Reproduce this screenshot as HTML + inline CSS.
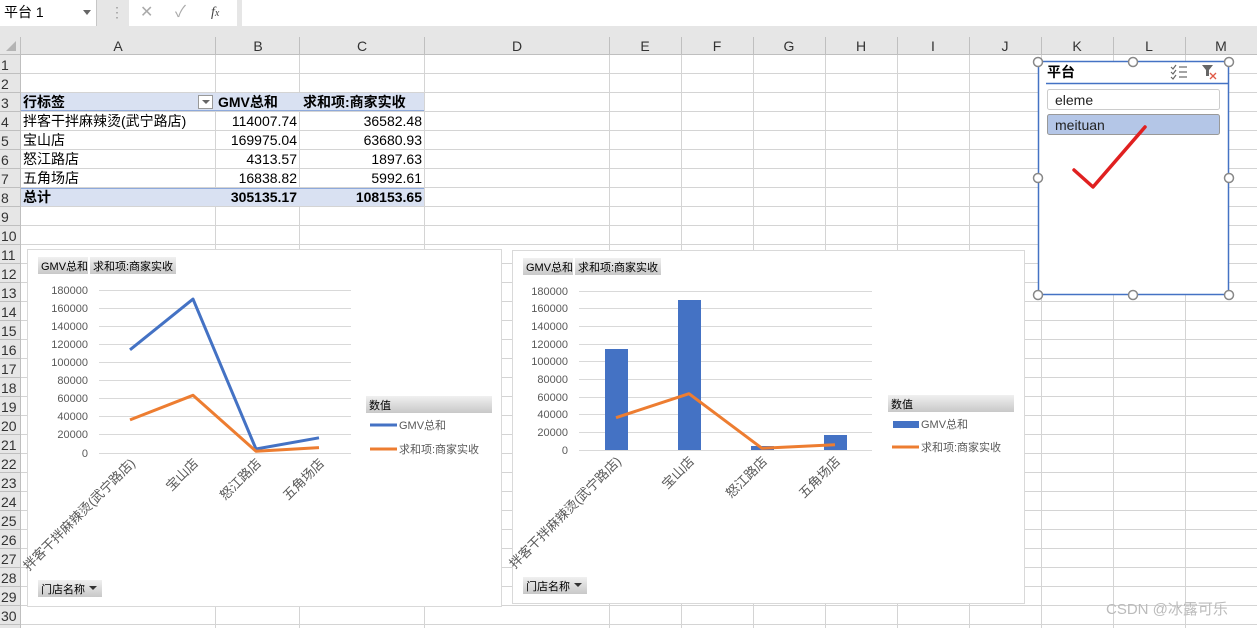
<!DOCTYPE html>
<html><head><meta charset="utf-8"><style>
*{margin:0;padding:0;box-sizing:border-box}
body{width:1257px;height:628px;overflow:hidden;background:#fff;font-family:"Liberation Sans","Noto Sans CJK SC",sans-serif;position:relative}
.abs{position:absolute}
.t{position:absolute;font-size:14px;color:#000;white-space:nowrap;line-height:19px}
.r{text-align:right}
.b{font-weight:bold}
</style></head><body>
<div class="abs" style="left:0;top:0;width:1257px;height:37px;background:#e6e6e6"></div>
<div class="abs" style="left:0;top:0;width:97px;height:26px;background:#fff;border-right:1px solid #c6c6c6"></div>
<div class="t" style="left:4px;top:3px;font-size:14px">平台 1</div>
<div class="abs" style="left:83px;top:10px;border-left:4px solid transparent;border-right:4px solid transparent;border-top:5px solid #666"></div>
<div class="t" style="left:110px;top:3px;color:#999">⋮</div>
<div class="abs" style="left:129px;top:0;width:108px;height:26px;background:#fff"></div>
<div class="t" style="left:140px;top:3px;color:#aaa;font-size:16px">✕</div>
<div class="t" style="left:175px;top:3px;color:#aaa;font-size:16px">✓</div>
<div class="t" style="left:211px;top:3px;color:#444;font-style:italic;font-family:'Liberation Serif',serif">f<span style="font-size:10px">x</span></div>
<div class="abs" style="left:242px;top:0;width:1015px;height:26px;background:#fff"></div>

<svg class="abs" style="left:0;top:0" width="1257" height="628">
<rect x="0" y="37" width="1257" height="18" fill="#e6e6e6"/>
<rect x="0" y="37" width="20" height="591" fill="#e6e6e6"/>
<polygon points="16,41 16,51 6,51" fill="#b4b4b4"/>
<g stroke="#d4d4d4" stroke-width="1">
<line x1="215.5" y1="55" x2="215.5" y2="628"/><line x1="299.5" y1="55" x2="299.5" y2="628"/><line x1="424.5" y1="55" x2="424.5" y2="628"/><line x1="609.5" y1="55" x2="609.5" y2="628"/><line x1="681.5" y1="55" x2="681.5" y2="628"/><line x1="753.5" y1="55" x2="753.5" y2="628"/><line x1="825.5" y1="55" x2="825.5" y2="628"/><line x1="897.5" y1="55" x2="897.5" y2="628"/><line x1="969.5" y1="55" x2="969.5" y2="628"/><line x1="1041.5" y1="55" x2="1041.5" y2="628"/><line x1="1113.5" y1="55" x2="1113.5" y2="628"/><line x1="1185.5" y1="55" x2="1185.5" y2="628"/>
</g>
<g stroke="#d4d4d4" id="rows"></g>
<g stroke="#bfbfbf">
<line x1="20.5" y1="37" x2="20.5" y2="628"/><line x1="0" y1="54.5" x2="1257" y2="54.5"/>
<line x1="215.5" y1="37" x2="215.5" y2="55"/><line x1="299.5" y1="37" x2="299.5" y2="55"/><line x1="424.5" y1="37" x2="424.5" y2="55"/><line x1="609.5" y1="37" x2="609.5" y2="55"/><line x1="681.5" y1="37" x2="681.5" y2="55"/><line x1="753.5" y1="37" x2="753.5" y2="55"/><line x1="825.5" y1="37" x2="825.5" y2="55"/><line x1="897.5" y1="37" x2="897.5" y2="55"/><line x1="969.5" y1="37" x2="969.5" y2="55"/><line x1="1041.5" y1="37" x2="1041.5" y2="55"/><line x1="1113.5" y1="37" x2="1113.5" y2="55"/><line x1="1185.5" y1="37" x2="1185.5" y2="55"/>
</g>
<g font-size="14" fill="#333" text-anchor="middle" font-family="Liberation Sans">
<text x="118" y="51">A</text><text x="258" y="51">B</text><text x="362" y="51">C</text><text x="517" y="51">D</text><text x="645" y="51">E</text><text x="717" y="51">F</text><text x="789" y="51">G</text><text x="861" y="51">H</text><text x="933" y="51">I</text><text x="1005" y="51">J</text><text x="1077" y="51">K</text><text x="1149" y="51">L</text><text x="1221" y="51">M</text>
</g>
</svg>
<script>
var g=document.getElementById('rows'),s='',n='';
for(var i=1;i<=30;i++){var y=55+19*i-0.5;s+='<line x1="20" y1="'+y+'" x2="1257" y2="'+y+'"/>';s+='<line x1="0" y1="'+y+'" x2="20" y2="'+y+'" stroke="#bfbfbf"/>';
n+='<text x="1" y="'+(55+19*i-4)+'" font-size="14" fill="#333" stroke="none" font-family="Liberation Sans">'+i+'</text>';}
g.innerHTML=s+n;
</script>

<div class="abs" style="left:21px;top:93px;width:403px;height:18px;background:#d9e1f2;border-bottom:1px solid #8ea9db"></div>
<div class="abs" style="left:21px;top:188px;width:403px;height:18px;background:#d9e1f2;border-top:1px solid #8ea9db"></div>
<div class="abs" style="left:198px;top:95px;width:15px;height:14px;background:#fff;border:1px solid #999"></div>
<div class="abs" style="left:202px;top:100px;border-left:4px solid transparent;border-right:4px solid transparent;border-top:4px solid #666"></div>
<div class="t b" style="left:23px;top:93px">行标签</div>
<div class="t b" style="left:218px;top:93px">GMV总和</div>
<div class="t b" style="left:303px;top:93px">求和项:商家实收</div>
<div class="t" style="left:23px;top:112px">拌客干拌麻辣烫(武宁路店)</div>
<div class="t" style="left:23px;top:131px">宝山店</div>
<div class="t" style="left:23px;top:150px">怒江路店</div>
<div class="t" style="left:23px;top:169px">五角场店</div>
<div class="t b" style="left:23px;top:188px">总计</div>
<div class="t r" style="left:200px;width:97px;top:112px">114007.74</div>
<div class="t r" style="left:200px;width:97px;top:131px">169975.04</div>
<div class="t r" style="left:200px;width:97px;top:150px">4313.57</div>
<div class="t r" style="left:200px;width:97px;top:169px">16838.82</div>
<div class="t r b" style="left:200px;width:97px;top:188px">305135.17</div>
<div class="t r" style="left:300px;width:122px;top:112px">36582.48</div>
<div class="t r" style="left:300px;width:122px;top:131px">63680.93</div>
<div class="t r" style="left:300px;width:122px;top:150px">1897.63</div>
<div class="t r" style="left:300px;width:122px;top:169px">5992.61</div>
<div class="t r b" style="left:300px;width:122px;top:188px">108153.65</div>

<svg class="abs" style="left:0;top:0" width="1257" height="628" font-family="Liberation Sans,Noto Sans CJK SC,sans-serif">
<defs><linearGradient id="gb" x1="0" y1="0" x2="0" y2="1"><stop offset="0" stop-color="#f0f0f0"/><stop offset="1" stop-color="#c8c8c8"/></linearGradient></defs>
<rect x="27.5" y="249.5" width="474" height="357" fill="#fff" stroke="#d9d9d9"/>
<rect x="38" y="257" width="50" height="17" fill="url(#gb)"/><rect x="90" y="257" width="86" height="17" fill="url(#gb)"/>
<text x="41" y="270" font-size="11">GMV总和</text><text x="93" y="270" font-size="11">求和项:商家实收</text>
<g stroke="#d9d9d9"><line x1="99" x2="351" y1="290.5" y2="290.5"/><line x1="99" x2="351" y1="308.5" y2="308.5"/><line x1="99" x2="351" y1="326.5" y2="326.5"/><line x1="99" x2="351" y1="344.5" y2="344.5"/><line x1="99" x2="351" y1="362.5" y2="362.5"/><line x1="99" x2="351" y1="380.5" y2="380.5"/><line x1="99" x2="351" y1="398.5" y2="398.5"/><line x1="99" x2="351" y1="416.5" y2="416.5"/><line x1="99" x2="351" y1="434.5" y2="434.5"/><line x1="99" x2="351" y1="453.5" y2="453.5"/></g>
<g font-size="11" fill="#595959" text-anchor="end"><text x="88" y="294">180000</text><text x="88" y="312">160000</text><text x="88" y="330">140000</text><text x="88" y="348">120000</text><text x="88" y="366">100000</text><text x="88" y="384">80000</text><text x="88" y="402">60000</text><text x="88" y="420">40000</text><text x="88" y="438">20000</text><text x="88" y="457">0</text></g>
<polyline points="130,349.8 193,299.1 256,449 319,437.8" fill="none" stroke="#4472c4" stroke-width="3" stroke-linejoin="round"/>
<polyline points="130,419.9 193,395.3 256,451.3 319,447.6" fill="none" stroke="#ed7d31" stroke-width="3" stroke-linejoin="round"/>
<g font-size="13" fill="#595959" text-anchor="end">
<text transform="translate(136,464) rotate(-45)">拌客干拌麻辣烫(武宁路店)</text>
<text transform="translate(199,464) rotate(-45)">宝山店</text>
<text transform="translate(262,464) rotate(-45)">怒江路店</text>
<text transform="translate(325,464) rotate(-45)">五角场店</text></g>
<rect x="366" y="396" width="126" height="17" fill="url(#gb)"/><text x="369" y="409" font-size="11">数值</text>
<line x1="370" x2="397" y1="425" y2="425" stroke="#4472c4" stroke-width="3"/><text x="399" y="429" font-size="11" fill="#595959">GMV总和</text>
<line x1="370" x2="397" y1="449" y2="449" stroke="#ed7d31" stroke-width="3"/><text x="399" y="453" font-size="11" fill="#595959">求和项:商家实收</text>
<rect x="38" y="580" width="64" height="17" fill="url(#gb)"/><text x="41" y="593" font-size="11">门店名称</text><polygon points="89,586 97,586 93,590" fill="#333"/>

<rect x="512.5" y="250.5" width="512" height="353" fill="#fff" stroke="#d9d9d9"/>
<rect x="523" y="258" width="50" height="17" fill="url(#gb)"/><rect x="575" y="258" width="86" height="17" fill="url(#gb)"/>
<text x="526" y="271" font-size="11">GMV总和</text><text x="578" y="271" font-size="11">求和项:商家实收</text>
<g stroke="#d9d9d9"><line x1="579" x2="872" y1="291.5" y2="291.5"/><line x1="579" x2="872" y1="308.5" y2="308.5"/><line x1="579" x2="872" y1="326.5" y2="326.5"/><line x1="579" x2="872" y1="344.5" y2="344.5"/><line x1="579" x2="872" y1="361.5" y2="361.5"/><line x1="579" x2="872" y1="379.5" y2="379.5"/><line x1="579" x2="872" y1="397.5" y2="397.5"/><line x1="579" x2="872" y1="414.5" y2="414.5"/><line x1="579" x2="872" y1="432.5" y2="432.5"/><line x1="579" x2="872" y1="450.5" y2="450.5"/></g>
<g font-size="11" fill="#595959" text-anchor="end"><text x="568" y="295">180000</text><text x="568" y="312">160000</text><text x="568" y="330">140000</text><text x="568" y="348">120000</text><text x="568" y="365">100000</text><text x="568" y="383">80000</text><text x="568" y="401">60000</text><text x="568" y="418">40000</text><text x="568" y="436">20000</text><text x="568" y="454">0</text></g>
<g fill="#4472c4"><rect x="605" y="349" width="23" height="101"/><rect x="678" y="300" width="23" height="150"/><rect x="751" y="446" width="23" height="4"/><rect x="824" y="435" width="23" height="15"/></g>
<polyline points="616,417.7 689,393.7 762,448.3 835,444.7" fill="none" stroke="#ed7d31" stroke-width="3" stroke-linejoin="round"/>
<g font-size="13" fill="#595959" text-anchor="end">
<text transform="translate(622,462) rotate(-45)">拌客干拌麻辣烫(武宁路店)</text>
<text transform="translate(695,462) rotate(-45)">宝山店</text>
<text transform="translate(768,462) rotate(-45)">怒江路店</text>
<text transform="translate(841,462) rotate(-45)">五角场店</text></g>
<rect x="888" y="395" width="126" height="17" fill="url(#gb)"/><text x="891" y="408" font-size="11">数值</text>
<rect x="893" y="421" width="26" height="7" fill="#4472c4"/><text x="921" y="428" font-size="11" fill="#595959">GMV总和</text>
<line x1="892" x2="919" y1="447" y2="447" stroke="#ed7d31" stroke-width="3"/><text x="921" y="451" font-size="11" fill="#595959">求和项:商家实收</text>
<rect x="523" y="577" width="64" height="17" fill="url(#gb)"/><text x="526" y="590" font-size="11">门店名称</text><polygon points="574,583 582,583 578,587" fill="#333"/>

<rect x="1038.5" y="61.5" width="190" height="233" fill="#fff" stroke="#4472c4" stroke-width="1.5"/>
<text x="1047" y="77" font-size="14" font-weight="bold">平台</text>
<line x1="1046" x2="1229" y1="83.5" y2="83.5" stroke="#4472c4" stroke-width="1.5"/>
<g stroke="#666" stroke-width="1.2"><line x1="1179" x2="1187" y1="67" y2="67"/><line x1="1179" x2="1187" y1="72" y2="72"/><line x1="1179" x2="1187" y1="77" y2="77"/><polyline points="1171,67 1173,69 1176,65" fill="none"/><polyline points="1171,72 1173,74 1176,70" fill="none"/><polyline points="1171,77 1173,79 1176,75" fill="none"/></g>
<polygon points="1202,65 1213,65 1209,70 1209,76 1206,76 1206,70" fill="#666"/>
<g stroke="#e05a47" stroke-width="1.3"><line x1="1210" x2="1216" y1="73" y2="79"/><line x1="1216" x2="1210" y1="73" y2="79"/></g>
<rect x="1047.5" y="89.5" width="172" height="20" rx="2" fill="#fff" stroke="#ccc"/>
<text x="1055" y="105" font-size="14" fill="#222">eleme</text>
<rect x="1047.5" y="114.5" width="172" height="20" rx="2" fill="#b4c6e7" stroke="#999"/>
<text x="1055" y="130" font-size="14" fill="#222">meituan</text>
<polyline points="1074,170 1093,187 1145,127" fill="none" stroke="#e02020" stroke-width="3.5" stroke-linecap="round" stroke-linejoin="round"/>
<g fill="#fff" stroke="#888" stroke-width="1.5">
<circle cx="1038" cy="62" r="4.5"/><circle cx="1133" cy="62" r="4.5"/><circle cx="1229" cy="62" r="4.5"/>
<circle cx="1038" cy="178" r="4.5"/><circle cx="1229" cy="178" r="4.5"/>
<circle cx="1038" cy="295" r="4.5"/><circle cx="1133" cy="295" r="4.5"/><circle cx="1229" cy="295" r="4.5"/></g>
<text x="1106" y="614" font-size="15" fill="#bbb">CSDN @冰露可乐</text>
</svg>
</body></html>
